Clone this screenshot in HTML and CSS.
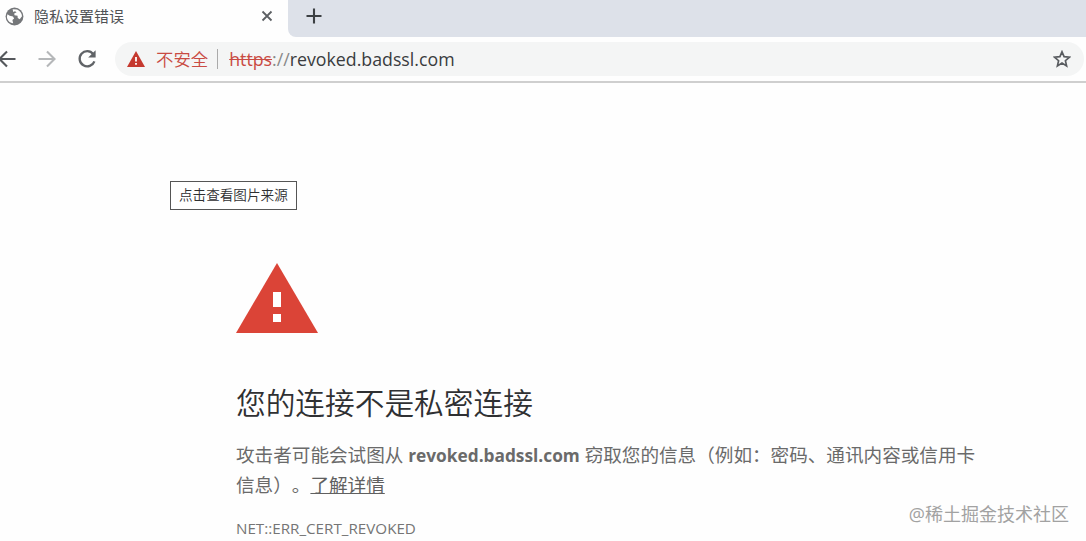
FILE: index.html
```
<!DOCTYPE html>
<html lang="zh-CN">
<head>
  <meta charset="UTF-8" />
  <meta name="viewport" content="width=device-width, initial-scale=1.0" />
  <title>隐私设置错误</title>
  <link rel="stylesheet" href="styles.css">
</head>
<body>

<header>
  <div class="tab-strip">
    <div class="tab">
      <svg class="globe" viewBox="0 0 20 20">
        <circle cx="10" cy="10" r="9.4" fill="#75777a" />
        <path d="M2.6 7.5 L5 9.3 L8.4 10 L9.6 12 L7.8 13.6 L8.6 17.2 C4.6 16.8 2 13.6 2 10 Z" fill="#fff" />
        <path d="M8 2.3 L12.8 2.7 C15.8 4 17.7 6.6 17.9 9.8 L15.5 12.8 L13.4 11.5 L13.2 9.2 L10 8.7 L9.7 6.9 L12.2 5.6 L10.5 4.5 L8.7 5.2 Z" fill="#fff" />
      </svg>
      <span class="tab-title">隐私设置错误</span>
      <svg class="close" viewBox="0 0 12 12">
        <path d="M1.5 1.5 L10.5 10.5 M10.5 1.5 L1.5 10.5" stroke="#5c5f63" stroke-width="1.8" />
      </svg>
    </div>
    <div class="strip-rest">
      <svg class="new-tab" viewBox="0 0 16 16">
        <path d="M8 0.5 V15.5 M0.5 8 H15.5" stroke="#3c4043" stroke-width="2.1" />
      </svg>
    </div>
  </div>

  <div class="toolbar">
    <svg class="back" viewBox="0 0 20 20">
      <path d="M18.5 10 H3 M10 2.5 L2.5 10 L10 17.5" fill="none" stroke="#55585c" stroke-width="2.1" />
    </svg>
    <svg class="forward" viewBox="0 0 20 20">
      <path d="M1.5 10 H17 M10 2.5 L17.5 10 L10 17.5" fill="none" stroke="#b5b7b9" stroke-width="2.1" />
    </svg>
    <svg class="reload" viewBox="0 0 20 20">
      <path d="M16.2 5 A7.6 7.6 0 1 0 17.4 12.3" fill="none" stroke="#606367" stroke-width="2.3" />
      <path d="M18.6 1.2 V8.6 H11.2 Z" fill="#606367" />
    </svg>
    <div class="omnibox">
      <svg class="danger" viewBox="0 0 18 16">
        <path d="M9 0 L18 16 H0 Z" fill="#c5392f" />
        <path d="M8.1 6 H9.9 V10.6 H8.1 Z M8.1 12 H9.9 V13.8 H8.1 Z" fill="#fff" />
      </svg>
      <span class="insecure">不安全</span>
      <span class="separator"></span>
      <span class="url"><s>https</s><i>://</i>revoked.badssl.com</span>
      <svg class="star" viewBox="0 0 18 18">
        <path d="M9 1.8 L11.1 6.7 L16.4 7.2 L12.4 10.7 L13.6 15.9 L9 13.1 L4.4 15.9 L5.6 10.7 L1.6 7.2 L6.9 6.7 Z" fill="none" stroke="#595c60" stroke-width="1.7" />
      </svg>
    </div>
  </div>
</header>

<main>
  <svg class="warning" viewBox="0 0 82 70">
    <path d="M41 0 L82 70 H0 Z" fill="#db4437" />
    <path d="M37 29 H45 V44 H37 Z M37 51 H45 V59 H37 Z" fill="#fff" />
  </svg>
  <h1>您的连接不是私密连接</h1>
  <p>攻击者可能会试图从 <strong>revoked.badssl.com</strong> 窃取您的信息（例如：密码、通讯内容或信用卡<br>信息）。<a href="#">了解详情</a></p>
  <div class="error-code">NET::ERR_CERT_REVOKED</div>
</main>

<div class="tooltip">点击查看图片来源</div>
<div class="watermark">@稀土掘金技术社区</div>

</body>
</html>
```

FILE: styles.css
```
* {
  box-sizing: border-box;
}

body {
  margin: 0;
  height: 541px;
  position: relative;
  overflow: hidden;
  background-color: #fefefe;
  color: #2f3032;
  font-family: "Open Sans", "Noto Sans CJK SC", sans-serif;
  text-spacing-trim: space-all;
}

svg {
  display: block;
  flex: none;
}

.tab-strip {
  display: flex;
  height: 37px;
}

.tab {
  display: flex;
  align-items: center;
  width: 288px;
  padding: 0 15px 5px 5px;
}

.strip-rest {
  flex: 1;
  border-bottom-left-radius: 8px;
  background-color: #dde1e9;
}

.globe {
  width: 19px;
  height: 19px;
}

.tab-title {
  flex: 1;
  margin-left: 10px;
  font-size: 15px;
  line-height: 20px;
  color: #505255;
}

.close {
  width: 12px;
  height: 12px;
}

.new-tab {
  width: 16px;
  height: 16px;
  margin: 8px 0 0 18px;
}

.toolbar {
  display: flex;
  align-items: center;
  height: 46px;
  padding-bottom: 1px;
  border-bottom: 2px solid #cfcfcf;
}

.back {
  width: 20px;
  height: 20px;
  margin-left: -3px;
}

.forward {
  width: 20px;
  height: 20px;
  margin-left: 20px;
}

.reload {
  width: 20px;
  height: 20px;
  margin-left: 20px;
}

.omnibox {
  display: flex;
  align-items: center;
  flex: 1;
  height: 34px;
  margin: 0 2px 0 18px;
  padding: 0 13px 0 12px;
  border-radius: 17px;
  background-color: #f4f5f5;
}

.danger {
  width: 18px;
  height: 16px;
}

.insecure {
  margin-left: 11px;
  font-size: 17.4px;
  font-weight: 350;
  color: #c94b43;
}

.separator {
  width: 1px;
  height: 20px;
  margin: 0 11px 0 9px;
  background-color: #aaa;
}

.url {
  flex: 1;
  font-size: 17.75px;
  color: #3a3c3e;
}

.url s {
  color: #c94b43;
}

.url i {
  font-style: normal;
  color: #888;
}

.star {
  width: 18px;
  height: 18px;
}

main {
  width: 750px;
  margin: 180px 0 0 236px;
}

.warning {
  width: 82px;
  height: 70px;
}

h1 {
  margin: 50px 0 17px;
  font-size: 29.7px;
  line-height: 40px;
  font-weight: 350;
}

p {
  margin: 0;
  font-size: 18.6px;
  line-height: 30px;
  color: #6a6a6a;
  white-space: nowrap;
}

p strong {
  font-size: 17.3px;
  line-height: 1;
}

p a {
  color: #606060;
}

.error-code {
  margin-top: 17px;
  font-size: 15.2px;
  line-height: 22px;
  color: #757575;
}

.tooltip {
  position: absolute;
  left: 170px;
  top: 181px;
  width: 127px;
  height: 29px;
  padding-left: 8px;
  border: 1px solid #555;
  background-color: #fff;
  font-size: 13.6px;
  font-weight: 350;
  line-height: 26px;
  white-space: nowrap;
}

.watermark {
  position: absolute;
  right: 17px;
  bottom: 15px;
  font-size: 18px;
  line-height: 24px;
  color: #a2a2a2;
}
```
